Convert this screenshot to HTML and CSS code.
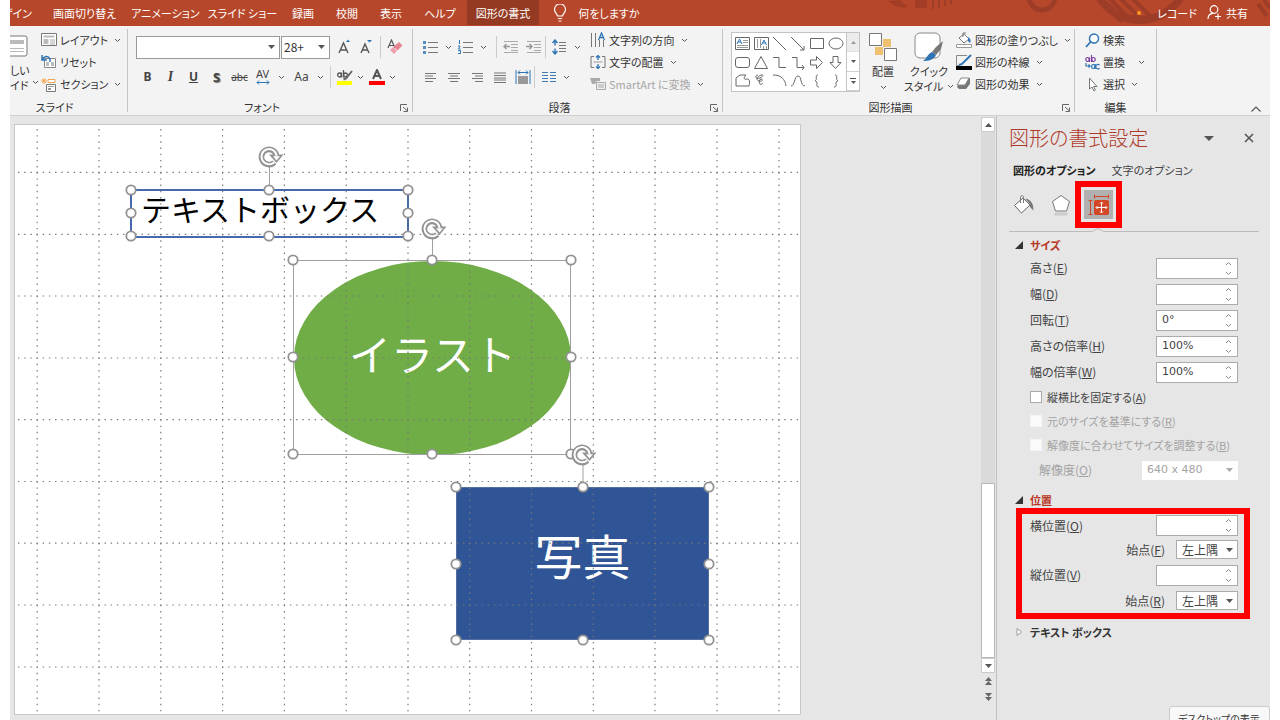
FILE: index.html
```html
<!DOCTYPE html>
<html lang="ja">
<head>
<meta charset="utf-8">
<title>図形の書式設定</title>
<link rel="stylesheet" href="styles.css">
</head>
<body>
<svg class="defs" aria-hidden="true">
  <symbol id="chev" viewBox="0 0 7 5"><path d="M1 1l2.500 2.500L6 1" fill="none" stroke="#555"/></symbol>
  <symbol id="tri" viewBox="0 0 7 4"><path d="M0 0h7l-3.500 4z" fill="#555"/></symbol>
  <symbol id="launch" viewBox="0 0 9 8"><path d="M.5 7V.5H7M3 3l4.500 4M7.500 3.500v4h-4" fill="none" stroke="#666"/></symbol>
  <symbol id="handle" viewBox="-6 -6 12 12"><circle r="4.700" fill="#fff" stroke="#929292" stroke-width="1.800"/></symbol>
  <symbol id="rotate" viewBox="-15 -12 30 24">
    <path d="M5.400 5.400A7.600 7.600 0 1 1 7.600-1" fill="none" stroke="#929292" stroke-width="5.600"/>
    <path d="M0-2.500h14.500L7.500 6z" fill="#929292"/>
    <path d="M5 5.400A7.600 7.600 0 1 1 7.600-1" fill="none" stroke="#fff" stroke-width="2"/>
    <path d="M4-.8h7L7.500 3.600z" fill="#fff"/>
  </symbol>
</svg>
<div class="app">
  <header class="tabs">
    <svg class="decor" viewBox="0 0 430 25" aria-hidden="true">
      <g fill="none" stroke="#9e3d27">
        <circle cx="202" cy="-3" r="13" stroke-width="5"/>
        <circle cx="300" cy="-28" r="48" stroke-width="8"/>
        <path d="M258-2l24 24M269-2l22 22M280-2l20 20M292-2l18 18" stroke-width="4"/>
        <path d="M93 0v9M99 0v8M105 0v6M111 0v4" stroke-width="2"/>
        <path d="M418 4l9 12M424 0l6 8" stroke-width="4"/>
      </g>
      <path d="M75 0h12v8H75zM48 1a22 22 0 0 0 20 6L60 0z" fill="#a43d26"/>
    </svg>
    <nav class="tablist">
      <button class="tab tab-first">ザイン</button>
      <button class="tab">画面切り替え</button>
      <button class="tab tab-kana">アニメーション</button>
      <button class="tab tab-kana">スライド ショー</button>
      <button class="tab">録画</button>
      <button class="tab">校閲</button>
      <button class="tab">表示</button>
      <button class="tab">ヘルプ</button>
      <button class="tab tab-active">図形の書式</button>
    </nav>
    <button class="tell">
      <svg width="14" height="18" viewBox="0 0 14 18"><path d="M4.500 12c0-2-3-3.300-3-6.500a5.500 5.500 0 0 1 11 0c0 3.200-3 4.500-3 6.500zM5 14.500h4M5.500 17h3" fill="none" stroke="#fff" stroke-width="1.200"/></svg>
      何をしますか
    </button>
    <div class="account">
      <button class="tab-link"><i class="dot"></i>レコード</button>
      <button class="tab-link">
        <svg width="15" height="15" viewBox="0 0 15 15"><g fill="none" stroke="#fff" stroke-width="1.200"><circle cx="7" cy="4.500" r="3.800"/><path d="M1 14c0-3.500 2-5.500 5-5.700M11 8.500v6M8 11.500h6"/></g></svg>
        共有
      </button>
    </div>
  </header>

  <section class="ribbon">
    <div class="group g-slide">
      <div class="body">
        <button class="newslide">
          <svg width="18" height="22" viewBox="0 0 18 22"><rect x="-6" y="1" width="23" height="20" rx="2" fill="#fff" stroke="#777"/><path d="M0 5h14v4H0z" fill="#bbb"/><path d="M0 13.500h14M0 16.500h14" stroke="#bbb"/></svg>
          <span>しい</span>
          <span>イド <svg class="chev"><use href="#chev"/></svg></span>
        </button>
        <div class="stack">
          <button class="cmd"><svg width="16" height="14" viewBox="0 0 16 14"><path d="M.5.500h15v12H.5z" fill="#fff" stroke="#777"/><path d="M2.500 2.500h11v2h-11zM2.500 6h5v5h-5z" fill="#bbb"/><path d="M9 7h5M9 9h5M9 11h5" stroke="#aaa"/></svg>レイアウト<svg class="chev"><use href="#chev"/></svg></button>
          <button class="cmd"><svg width="16" height="14" viewBox="0 0 16 14"><path d="M3.500 3.500h11v9h-11z" fill="#fff" stroke="#888"/><path d="M5 7h3v4H5zM10 7h3v4h-3z" fill="#bbb"/><path d="M1 0v5h5M1 5c2-4 6-5 8-1v3" fill="none" stroke="#2e74b5" stroke-width="1.500"/></svg>リセット</button>
          <button class="cmd"><svg width="16" height="15" viewBox="0 0 16 15"><path d="M3 1v6M0 4h6M1 2l4 4M5 2L1 6" stroke="#f0a850"/><path d="M7 2.500h7v3H7z" fill="#fff" stroke="#f0a850"/><path d="M5.500 7.500h9v7h-9z" fill="#fff" stroke="#777"/><path d="M7 9h6v1H7zM7 11h3v2H7z" fill="#999"/></svg>セクション<svg class="chev"><use href="#chev"/></svg></button>
        </div>
      </div>
      <div class="caption">スライド</div>
    </div>

    <div class="group g-font">
      <div class="body rows">
        <div class="row">
          <div class="combo combo-font"><input type="text" aria-label="フォント名"><svg class="tri"><use href="#tri"/></svg></div>
          <div class="combo combo-size"><input type="text" value="28+" aria-label="フォント サイズ"><svg class="tri"><use href="#tri"/></svg></div>
          <button class="ico wide" aria-label="拡大"><svg width="16" height="16" viewBox="0 0 16 16"><path d="M3 14L7.500 4 12 14M4.500 11h6" fill="none" stroke="#555" stroke-width="1.400"/><path d="M10 3l2-2.500L14 3z" fill="#2e74b5"/></svg></button>
          <button class="ico wide" aria-label="縮小"><svg width="16" height="16" viewBox="0 0 16 16"><path d="M3 14L7 5l4 9M4.500 11h5" fill="none" stroke="#555" stroke-width="1.400"/><path d="M9 1h5l-2.500 2.500z" fill="#2e74b5"/></svg></button>
          <i class="vline"></i>
          <button class="ico" aria-label="書式のクリア"><svg width="16" height="16" viewBox="0 0 16 16"><path d="M1 9l3.500-8L8 9M2.500 6.500h4" fill="none" stroke="#555" stroke-width="1.200"/><path d="M3 11l3-3 4 4-3 3z" fill="#f0a0ac"/><path d="M6.500 7.500L12 3l3.500 3.500-5 5z" fill="#e88594"/></svg></button>
        </div>
        <div class="row row-fmt">
          <button class="fmt"><b>B</b></button>
          <button class="fmt fmt-i">I</button>
          <button class="fmt"><u><b>U</b></u></button>
          <button class="fmt fmt-s">S</button>
          <button class="fmt fmt-abc"><s>abc</s></button>
          <button class="fmt fmt-av"><span>AV</span><svg width="14" height="5" viewBox="0 0 14 5"><path d="M1 2.500h12M3 .5l-2 2 2 2M11 .5l2 2-2 2" fill="none" stroke="#2e74b5"/></svg></button>
          <svg class="chev"><use href="#chev"/></svg>
          <button class="fmt fmt-aa">Aa</button>
          <svg class="chev"><use href="#chev"/></svg>
          <i class="vline"></i>
          <button class="ico" aria-label="蛍光ペン"><svg width="16" height="16" viewBox="0 0 16 16"><g fill="none" stroke="#555" stroke-width="1.300"><ellipse cx="2.500" cy="6" rx="1.800" ry="2"/><path d="M4.500 3.500V8.500M6.500 1v7.500"/><ellipse cx="8.500" cy="6" rx="1.800" ry="2"/></g><path d="M15 2L9 9.500l-2.500 1" fill="none" stroke="#666" stroke-width="2"/><path d="M0 12h15v4H0z" fill="#ff0"/></svg></button>
          <svg class="chev"><use href="#chev"/></svg>
          <button class="ico" aria-label="フォントの色"><svg width="16" height="16" viewBox="0 0 16 16"><path d="M4 10L8 1l4 9M5.500 7h5" fill="none" stroke="#555" stroke-width="2"/><path d="M0 12h16v4H0z" fill="#f00"/></svg></button>
          <svg class="chev"><use href="#chev"/></svg>
        </div>
      </div>
      <div class="caption">フォント<svg class="launch"><use href="#launch"/></svg></div>
    </div>

    <div class="group g-para">
      <div class="body">
        <div class="rows">
          <div class="row">
            <button class="ico" aria-label="箇条書き"><svg width="16" height="14" viewBox="0 0 16 14"><path d="M0 1h3v3H0zM0 6h3v3H0zM0 11h3v3H0z" fill="#2e74b5" opacity=".8"/><path d="M5 2.500h10M5 7.500h10M5 12.500h10" stroke="#777"/></svg></button>
            <svg class="chev"><use href="#chev"/></svg>
            <button class="ico" aria-label="段落番号"><svg width="16" height="14" viewBox="0 0 16 14"><path d="M1.500 0v4M0 6h2l-1.500 3h2M0 10.500h2.500v3H0" fill="none" stroke="#2e74b5"/><path d="M5 2.500h10M5 7.500h10M5 12.500h10" stroke="#777"/></svg></button>
            <svg class="chev"><use href="#chev"/></svg>
            <i class="vline"></i>
            <button class="ico" disabled aria-label="インデント減"><svg width="16" height="14" viewBox="0 0 16 14"><path d="M1 1.500h14M8 4.500h7M8 7.500h7M8 10.500h7M1 12.500h14" stroke="#aaa"/><path d="M7 6.500H1M3.500 4L1 6.500 3.500 9" fill="none" stroke="#999" stroke-width="1.500"/></svg></button>
            <button class="ico" disabled aria-label="インデント増"><svg width="16" height="14" viewBox="0 0 16 14"><path d="M1 1.500h14M8 4.500h7M8 7.500h7M8 10.500h7M1 12.500h14" stroke="#aaa"/><path d="M0 6.500h6M3.500 4L6 6.500 3.500 9" fill="none" stroke="#999" stroke-width="1.500"/></svg></button>
            <i class="vline"></i>
            <button class="ico" aria-label="行間"><svg width="16" height="16" viewBox="0 0 16 16"><path d="M3 1v5.500M3 9.500V15M.5 4L3 1l2.500 3M.5 12L3 15l2.500-3" fill="none" stroke="#2e74b5" stroke-width="1.400"/><path d="M7 3.500h7M7 6.500h7M7 9.500h7M7 12.500h7" stroke="#777"/></svg></button>
            <svg class="chev"><use href="#chev"/></svg>
          </div>
          <div class="row row-align">
            <button class="ico" aria-label="左揃え"><svg width="14" height="11" viewBox="0 0 14 11"><path d="M1 1.500h11M1 4h8M1 6.500h11M1 9.500h8" stroke="#777"/></svg></button>
            <button class="ico" aria-label="中央揃え"><svg width="14" height="11" viewBox="0 0 14 11"><path d="M1 1.500h12M3 4h8M1 6.500h12M3 9.500h8" stroke="#777"/></svg></button>
            <button class="ico" aria-label="右揃え"><svg width="14" height="11" viewBox="0 0 14 11"><path d="M2 1.500h11M5 4h8M2 6.500h11M5 9.500h8" stroke="#777"/></svg></button>
            <button class="ico" aria-label="両端揃え"><svg width="14" height="11" viewBox="0 0 14 11"><path d="M1 1h12M1 3.500h12M1 6h12M1 8h12M1 10.500h12" stroke="#777"/></svg></button>
            <button class="ico" aria-label="均等割り付け"><svg width="16" height="16" viewBox="0 0 16 16"><path d="M1 1v14M15 1v14M3 3.500h10M5 1.500l-2 2 2 2M11 1.500l2 2-2 2" fill="none" stroke="#2e74b5"/><path d="M3 7h10v8H3z" fill="#999"/></svg></button>
            <i class="vline"></i>
            <button class="ico" aria-label="段組み"><svg width="14" height="12" viewBox="0 0 14 12"><path d="M0 1.500h6M0 4.500h6M0 7.500h6M0 10.500h6M8 1.500h6M8 4.500h6M8 7.500h6M8 10.500h6" stroke="#3c7ab5"/></svg></button>
            <svg class="chev"><use href="#chev"/></svg>
          </div>
        </div>
        <div class="stack">
          <button class="cmd"><svg width="16" height="16" viewBox="0 0 16 16"><path d="M1.500 1v14M5.500 1v14M9.500 8v7M13.500 8v7" stroke="#777"/><path d="M8.500 8L11.500 1l3 7M9.500 5.500h4" fill="none" stroke="#2e74b5" stroke-width="1.300"/></svg>文字列の方向<svg class="chev"><use href="#chev"/></svg></button>
          <button class="cmd"><svg width="16" height="14" viewBox="0 0 16 14"><path d="M4 1.500H1v11h3M12 1.500h3v11h-3" fill="none" stroke="#777"/><path d="M3.500 7h9" stroke="#999"/><path d="M8 0v5M8 9v5M6 2.500L8 .5l2 2M6 11.500l2 2 2-2" fill="none" stroke="#2e74b5" stroke-width="1.300"/></svg>文字の配置<svg class="chev"><use href="#chev"/></svg></button>
          <button class="cmd" disabled><svg width="16" height="14" viewBox="0 0 16 14"><path d="M0 1h10v3H7L5 7H2z" fill="#aaa"/><path d="M6.500 5.500h9v7h-9z" fill="#eee" stroke="#aaa"/><path d="M8 8h6M8 10h6" stroke="#aaa"/></svg>SmartArt に変換<svg class="chev"><use href="#chev"/></svg></button>
        </div>
      </div>
      <div class="caption">段落<svg class="launch"><use href="#launch"/></svg></div>
    </div>

    <div class="group g-draw">
      <div class="body">
        <div class="gallery">
          <svg width="114" height="58" viewBox="0 0 114 58" fill="none" stroke="#666">
            <path d="M3.500 4.500h14v12h-14zM22.500 4.500h14v12h-14z" fill="#fff"/><path d="M11 7.500h5M11 9.500h5M5 12.500h11M5 14.500h11M25.500 6v9M28.500 6v9M31.500 13v3M34.500 13v3" stroke="#999"/><path d="M5 11l2.500-5 2.500 5M6 9h3M29.500 12l2.500-5 2.500 5M30.500 10h3" stroke="#2e74b5"/>
            <path d="M41 4l13 13M59 4l13 13M72 13v4h-4M78.500 5.500h13v10h-13z"/><ellipse cx="104" cy="10.500" rx="7" ry="5.500"/>
            <rect x="3.500" y="24.500" width="14" height="10" rx="2.500"/><path d="M22.500 35.500l6.500-12 6.500 12zM41 24.500h6v10h7M60 24.500h5v10h7M70 32l2 2.500-2 2.500M78.500 27v5h6v3.500l6-6-6-6V27zM101 23.500v6h-3l5.500 6 5.500-6h-3v-6z"/>
            <path d="M4 53V45l4-3h6c-3 3-2 5 1 4 3 0 3 3 2 7zM26 42c-5 2-1 4 2 3s4-4 1-3-6 5-2 6 4-2 2-2-2 4-1 5 2 0 3-1M41 42c8 0 12 4 13 11M59 53c4 0 3-10 7-10s2 10 7 10M86 42c-3 0-1 4-2 5s-1 1-1 1 2 0 2 2-1 4 2 4M103 42c3 0 1 4 2 5s1 1 1 1-2 0-2 2 1 4-2 4"/>
          </svg>
          <div class="gallery-nav">
            <button aria-label="上" disabled><svg class="tri flip"><use href="#tri"/></svg></button>
            <button aria-label="下"><svg class="tri"><use href="#tri"/></svg></button>
            <button aria-label="その他"><i class="bar"></i><svg class="tri"><use href="#tri"/></svg></button>
          </div>
        </div>
        <button class="big">
          <svg width="28" height="28" viewBox="0 0 28 28"><path d="M14 6h8v8h-8zM6 14h8v8H6z" fill="#f0c070"/><path d="M.5.500h12v12H.5zM15.500 15.500h12v12h-12z" fill="#fff" stroke="#777"/></svg>
          <span>配置</span><svg class="chev"><use href="#chev"/></svg>
        </button>
        <button class="big">
          <svg width="30" height="30" viewBox="0 0 30 30"><rect x="1" y="1" width="25" height="25" rx="5" fill="#fff" stroke="#888"/><path d="M29 9l-7 6-4 5 4 3 5-6z" fill="#777"/><path d="M18 20l4 3c-2 5-8 6-13 6 4-2 4-7 9-9z" fill="#2e74b5"/></svg>
          <span>クイック</span><span class="nowrap">スタイル <svg class="chev"><use href="#chev"/></svg></span>
        </button>
        <div class="stack">
          <button class="cmd"><svg width="16" height="16" viewBox="0 0 16 16"><path d="M3 6l5-4 5 5-5 4zM7 5V1h3" fill="#fff" stroke="#777"/><path d="M12 5c3 2 3 4 2 6l-2-2z" fill="#2e74b5"/><path d="M.5 12.500h15v3H.5z" fill="#fff" stroke="#999"/></svg>図形の塗りつぶし<svg class="chev"><use href="#chev"/></svg></button>
          <button class="cmd"><svg width="16" height="16" viewBox="0 0 16 16"><path d="M11 1.500H.5v10h3" fill="none" stroke="#888"/><path d="M15 1L6 10l-3 1" fill="none" stroke="#2e74b5" stroke-width="2"/><path d="M0 12h16v4H0z" fill="#000"/></svg>図形の枠線<svg class="chev"><use href="#chev"/></svg></button>
          <button class="cmd"><svg width="16" height="14" viewBox="0 0 16 14"><path d="M5 1h9v6l-4 5H3l-2-2z" fill="#777"/><path d="M5 1h8L9 8H1z" fill="#fff" stroke="#888"/></svg>図形の効果<svg class="chev"><use href="#chev"/></svg></button>
        </div>
      </div>
      <div class="caption">図形描画<svg class="launch"><use href="#launch"/></svg></div>
    </div>

    <div class="group g-edit">
      <div class="body">
        <div class="stack">
          <button class="cmd"><svg width="15" height="15" viewBox="0 0 15 15"><circle cx="9" cy="5.500" r="4.500" fill="#fff" stroke="#2e74b5" stroke-width="1.500"/><path d="M5.500 9L1 14" stroke="#2e74b5" stroke-width="1.800"/></svg>検索</button>
          <button class="cmd"><svg width="15" height="15" viewBox="0 0 15 15"><g fill="none" stroke="#7b3fa0" stroke-width="1.200"><ellipse cx="2.500" cy="4.500" rx="1.700" ry="2"/><path d="M4.500 2.500v4.500M6.500 0v7"/><ellipse cx="8.500" cy="4.500" rx="1.700" ry="2"/></g><g fill="none" stroke="#2e74b5" stroke-width="1.200"><path d="M1 8v3h4M3.500 9.500L5 11l-1.500 1.500M10.200 9v5M14.500 10a2.200 2.200 0 1 0 0 3.200"/><ellipse cx="8.300" cy="11.500" rx="1.700" ry="2"/></g></svg>置換<svg class="chev far"><use href="#chev"/></svg></button>
          <button class="cmd"><svg width="15" height="15" viewBox="0 0 15 15"><path d="M4.500 1v11l2.500-2 2 4 1.500-1-2-3.500H12z" fill="#fff" stroke="#777"/></svg>選択<svg class="chev"><use href="#chev"/></svg></button>
        </div>
      </div>
      <div class="caption">編集</div>
    </div>
    <button class="collapse" aria-label="リボンを折りたたむ"><svg width="10" height="6" viewBox="0 0 10 6"><path d="M.5 5.500L5 1l4.500 4.500" fill="none" stroke="#555" stroke-width="1.200"/></svg></button>
  </section>

  <main class="work">
    <div class="stage">
      <div class="slide">
        <div class="shape textbox">テキストボックス</div>
        <div class="shape ellipse">イラスト</div>
        <div class="shape rect">写真</div>
        <svg class="overlay" viewBox="15 125 785 589" aria-hidden="true">
          <g stroke="#777" stroke-dasharray="1.400 4.780" stroke-width="1.200" fill="none">
            <path d="M37.200 129V712M99 129V712M160.800 129V712M222.600 129V712M284.400 129V712M346.200 129V712M408 129V712M469.700 129V712M531.500 129V712M593.300 129V712M655 129V712M717 129V712M779 129V712"/>
            <path d="M18 172.300H800M18 234.300H800M18 296H800M18 358H800M18 419.700H800M18 481.500H800M18 543.200H800M18 605H800M18 667H800"/>
          </g>
          <g fill="none" stroke="#a0a0a0"><path d="M293.500 260.500h277v194h-277zM269.500 165v25M432.500 237v23M583 463v24"/></g>
          <g>
            <use href="#handle" x="125" y="184" width="12" height="12"/><use href="#handle" x="263" y="184" width="12" height="12"/><use href="#handle" x="402" y="184" width="12" height="12"/>
            <use href="#handle" x="125" y="207" width="12" height="12"/><use href="#handle" x="402" y="207" width="12" height="12"/>
            <use href="#handle" x="125" y="230" width="12" height="12"/><use href="#handle" x="263" y="230" width="12" height="12"/><use href="#handle" x="402" y="230" width="12" height="12"/>
            <use href="#handle" x="287" y="254" width="12" height="12"/><use href="#handle" x="426" y="254" width="12" height="12"/><use href="#handle" x="565" y="254" width="12" height="12"/>
            <use href="#handle" x="287" y="351" width="12" height="12"/><use href="#handle" x="565" y="351" width="12" height="12"/>
            <use href="#handle" x="287" y="448" width="12" height="12"/><use href="#handle" x="426" y="448" width="12" height="12"/><use href="#handle" x="565" y="448" width="12" height="12"/>
            <use href="#handle" x="450" y="481" width="12" height="12"/><use href="#handle" x="577" y="481" width="12" height="12"/><use href="#handle" x="703" y="481" width="12" height="12"/>
            <use href="#handle" x="450" y="558" width="12" height="12"/><use href="#handle" x="703" y="558" width="12" height="12"/>
            <use href="#handle" x="450" y="634" width="12" height="12"/><use href="#handle" x="577" y="634" width="12" height="12"/><use href="#handle" x="703" y="634" width="12" height="12"/>
            <use href="#rotate" x="254" y="145" width="30" height="24"/><use href="#rotate" x="417" y="217" width="30" height="24"/><use href="#rotate" x="567" y="443" width="30" height="24"/>
          </g>
        </svg>
      </div>
    </div>
    <div class="scroll">
      <button class="sbtn" aria-label="上へ"><svg class="tri flip"><use href="#tri"/></svg></button>
      <div class="track"><div class="thumb"></div></div>
      <button class="sbtn" aria-label="下へ"><svg class="tri"><use href="#tri"/></svg></button>
      <button class="page" aria-label="前のスライド"><svg width="9" height="9" viewBox="0 0 9 9"><path d="M1 4l3.500-4L8 4zM1 8l3.500-4L8 8z" fill="#666"/></svg></button>
      <button class="page" aria-label="次のスライド"><svg width="9" height="9" viewBox="0 0 9 9"><path d="M1 0h7L4.500 4zM1 4h7L4.500 8z" fill="#666"/></svg></button>
    </div>
    <aside class="pane">
      <div class="pane-head">
        <h1>図形の書式設定</h1>
        <button aria-label="作業ウィンドウ オプション"><svg width="10" height="5" viewBox="0 0 10 5"><path d="M0 0h10L5 5z" fill="#555"/></svg></button>
        <button aria-label="閉じる"><svg width="10" height="10" viewBox="0 0 10 10"><path d="M1 1l8 8M9 1L1 9" stroke="#555" stroke-width="1.600"/></svg></button>
      </div>
      <div class="pane-tabs">
        <button class="on">図形のオプション</button>
        <button>文字のオプション</button>
      </div>
      <div class="pane-icons">
        <button class="pi" aria-label="塗りつぶしと線"><svg width="22" height="22" viewBox="0 0 22 22"><path d="M1.500 11.500L10 4l7 7-8.500 8z" fill="#fff" stroke="#666"/><path d="M7.500 9V3.500c0-2.500 3-2.500 3 0V9" fill="none" stroke="#777"/><path d="M12 4.500c6 1 8.500 5 8.500 12L17 13v-3z" fill="#777"/></svg></button>
        <button class="pi" aria-label="効果"><svg width="22" height="22" viewBox="0 0 22 22"><path d="M11 1.500l8.500 6-3 9.500h-11l-3-9.500z" fill="#fff" stroke="#777"/><path d="M5 18.500h12l1 3H4z" fill="#ccc"/></svg></button>
        <button class="marked" aria-label="サイズとプロパティ"><svg width="22" height="22" viewBox="0 0 22 22"><rect x="6" y="6" width="15" height="15" rx="2" fill="#d24726"/><path d="M13.500 8.500v10M8.500 13.500h10" stroke="#fff"/><path d="M12 9.500l1.500-1.500L15 9.500M12 17.500l1.500 1.500 1.500-1.500M9.500 12L8 13.500 9.500 15M17.500 12l1.500 1.500-1.500 1.500" fill="none" stroke="#fff"/><path d="M6 2.500h15M6.500.500v4M20.500.500v4M2.500 6v15M.500 6.500h4M.500 20.500h4" stroke="#d24726"/></svg></button>
      </div>
      <svg class="divider" viewBox="0 0 250 4" preserveAspectRatio="xMidYMid meet" aria-hidden="true"><path d="M0 3.500h83l6-3 6 3h155" fill="none" stroke="#bbb"/></svg>
      <h2 class="section"><svg width="8" height="8" viewBox="0 0 8 8"><path d="M8 0v8H0z" fill="#333"/></svg>サイズ</h2>
      <div class="fields">
        <div class="field"><label for="h">高さ(<u>E</u>)</label><div class="spin"><input id="h" type="text"><svg class="ud" viewBox="0 0 7 15"><path d="M1 4l2.500-2.500L6 4M1 11l2.500 2.500L6 11" fill="none" stroke="#888"/></svg></div></div>
        <div class="field"><label for="w">幅(<u>D</u>)</label><div class="spin"><input id="w" type="text"><svg class="ud" viewBox="0 0 7 15"><path d="M1 4l2.500-2.500L6 4M1 11l2.500 2.500L6 11" fill="none" stroke="#888"/></svg></div></div>
        <div class="field"><label for="r">回転(<u>T</u>)</label><div class="spin"><input id="r" type="text" value="0°"><svg class="ud" viewBox="0 0 7 15"><path d="M1 4l2.500-2.500L6 4M1 11l2.500 2.500L6 11" fill="none" stroke="#888"/></svg></div></div>
        <div class="field"><label for="hs">高さの倍率(<u>H</u>)</label><div class="spin"><input id="hs" type="text" value="100%"><svg class="ud" viewBox="0 0 7 15"><path d="M1 4l2.500-2.500L6 4M1 11l2.500 2.500L6 11" fill="none" stroke="#888"/></svg></div></div>
        <div class="field"><label for="ws">幅の倍率(<u>W</u>)</label><div class="spin"><input id="ws" type="text" value="100%"><svg class="ud" viewBox="0 0 7 15"><path d="M1 4l2.500-2.500L6 4M1 11l2.500 2.500L6 11" fill="none" stroke="#888"/></svg></div></div>
        <label class="check"><input type="checkbox"><span>縦横比を固定する(<u>A</u>)</span></label>
        <label class="check off"><input type="checkbox" disabled><span>元のサイズを基準にする(<u>R</u>)</span></label>
        <label class="check off"><input type="checkbox" disabled><span>解像度に合わせてサイズを調整する(<u>B</u>)</span></label>
        <div class="field off indent"><label for="res">解像度(<u>O</u>)</label><div class="drop drop-res"><select id="res" disabled><option>640 x 480</option></select><svg class="tri"><use href="#tri"/></svg></div></div>
      </div>
      <h2 class="section section-pos"><svg width="8" height="8" viewBox="0 0 8 8"><path d="M8 0v8H0z" fill="#333"/></svg>位置</h2>
      <div class="framed">
        <div class="field"><label for="x">横位置(<u>O</u>)</label><div class="spin"><input id="x" type="text"><svg class="ud" viewBox="0 0 7 15"><path d="M1 4l2.500-2.500L6 4M1 11l2.500 2.500L6 11" fill="none" stroke="#888"/></svg></div></div>
        <div class="field from"><label for="xf">始点(<u>F</u>)</label><div class="drop"><select id="xf"><option>左上隅</option></select><svg class="tri"><use href="#tri"/></svg></div></div>
        <div class="field"><label for="y">縦位置(<u>V</u>)</label><div class="spin"><input id="y" type="text"><svg class="ud" viewBox="0 0 7 15"><path d="M1 4l2.500-2.500L6 4M1 11l2.500 2.500L6 11" fill="none" stroke="#888"/></svg></div></div>
        <div class="field from"><label for="yf">始点(<u>R</u>)</label><div class="drop"><select id="yf"><option>左上隅</option></select><svg class="tri"><use href="#tri"/></svg></div></div>
      </div>
      <h2 class="section section-closed"><svg width="8" height="8" viewBox="0 0 8 8"><path d="M2 .5v7L6.500 4z" fill="#fff" stroke="#999"/></svg>テキスト ボックス</h2>
    </aside>
    <div class="tip">デスクトップの表示</div>
  </main>
</div>
</body>
</html>
```
FILE: styles.css
```css
* { box-sizing: border-box; }
html, body { height: 100%; }
body {
  margin: 0;
  background: #fff;
  color: #333;
  font-family: "Noto Sans CJK JP", "Noto Sans", sans-serif;
  font-size: 12px;
  line-height: 16px;
  font-feature-settings: "palt";
  overflow: hidden;
}
button, input, select { font: inherit; font-feature-settings: inherit; color: inherit; }
button { border: 0; padding: 0; background: none; white-space: nowrap; }
svg { flex: none; display: block; }
.defs { position: absolute; width: 0; height: 0; }
.chev { width: 7px; height: 5px; }
.tri { width: 7px; height: 4px; }
.flip { transform: rotate(180deg); }

.app { height: 100%; margin: 0 10px; display: flex; flex-direction: column; background: #e6e6e6; }

/* tab strip */
.tabs { position: relative; flex: none; height: 26px; padding-bottom: 1px; display: flex; background: #b7472a; color: #fff; overflow: hidden; }
.decor { position: absolute; right: 0; top: 0; width: 430px; height: 25px; }
.tablist { display: flex; }
.tab { padding: 0 11px; height: 25px; font-size: 11px; }
.tab-kana { padding: 0 4px; }
.tab-first { width: 32px; padding: 0 10px 0 0; display: flex; align-items: center; justify-content: flex-end; }
.tab-active { padding: 0 9px; background: #943a22; }
.tell { display: flex; align-items: center; gap: 11px; margin-left: 14px; font-size: 11px; }
.account { position: relative; margin-left: auto; padding-right: 22px; display: flex; gap: 10px; font-size: 11px; }
.tab-link { display: flex; align-items: center; gap: 4px; }
.dot { width: 4px; height: 4px; border-radius: 50%; background: #ff9a1a; margin-right: 12px; }

/* ribbon */
.ribbon { flex: none; height: 90px; display: flex; background: #f3f3f3; border-bottom: 1px solid #d0d0d0; padding: 3px 0; }
.group { flex: none; display: flex; flex-direction: column; border-right: 1px solid #c4c4c4; height: 83px; }
.body { flex: none; height: 71px; display: flex; }
.caption { display: flex; justify-content: center; height: 14px; line-height: 14px; font-size: 11px; position: relative; }
.launch { position: absolute; right: 3px; top: 4px; width: 9px; height: 8px; }
.g-slide { width: 118px; }
.g-slide .caption { padding-right: 28px; }
.g-font { width: 285px; }
.g-font .caption { padding-right: 16px; }
.g-para { width: 310px; }
.g-para .caption { padding-right: 16px; }
.g-draw { width: 352px; }
.g-draw .caption { padding-right: 16px; }
.g-edit { width: 82px; }
.stack { display: flex; flex-direction: column; }
.cmd { display: flex; align-items: center; gap: 3px; height: 22px; font-size: 11px; }
.cmd .chev { margin-left: 3px; }
.cmd .far { margin-left: 10px; }
.cmd:disabled { color: #a8a8a8; }
.nowrap { display: flex; align-items: center; gap: 4px; }

.newslide { width: 28px; padding-top: 6px; display: flex; flex-direction: column; align-items: flex-start; font-size: 11px; }
.newslide svg:first-child { margin-bottom: 6px; }
.newslide span { display: flex; align-items: center; gap: 4px; line-height: 15px; }
.newslide .chev { margin: 0; }
.g-slide .stack { margin-left: 3px; }

.rows { display: flex; flex-direction: column; }
.row { display: flex; align-items: center; height: 32px; }
.row-fmt, .row-align { height: 28px; }
.g-font .rows { padding: 2px 0 0 8px; }
.combo { display: flex; align-items: center; height: 23px; padding-right: 4px; background: #fff; border: 1px solid #999; }
.combo input { flex: 1; min-width: 0; border: 0; padding: 0 2px; background: none; outline: 0; }
.combo-font { width: 144px; }
.combo-size { width: 49px; margin-left: 1px; }
.ico { flex: none; display: flex; justify-content: center; align-items: center; width: 16px; height: 18px; }
.wide { margin-left: 6px; }
.vline { flex: none; width: 1px; height: 22px; background: #ccc; margin: 0 6px; }
.fmt { flex: none; width: 23px; height: 20px; color: #444; font-family: "Noto Sans", sans-serif; font-size: 12px; }
.fmt-i { font-family: "Liberation Serif", serif; font-style: italic; font-weight: 700; font-size: 14px; }
.fmt-s { font-weight: 700; text-shadow: 1px 1px 1px #777; font-size: 13px; }
.fmt-abc { font-size: 10px; }
.fmt-av { display: flex; flex-direction: column; align-items: center; line-height: 13px; font-size: 11px; }
.row-fmt .vline { margin: 0 6px 0 1px; }
.row-fmt .chev { margin: 0 5px 0 4px; }

.g-para .rows { flex: none; width: 177px; padding: 2px 0 0 10px; }
.g-para .row .chev { margin: 0 6px; }
.g-para .row .vline { margin: 0 6px 0 3px; }
.g-para .row .ico + .ico { margin-left: 7px; }

.g-draw .body { padding-left: 8px; }
.gallery { display: flex; height: 60px; margin-top: 3px; border: 1px solid #c4c4c4; background: #fff; }
.gallery-nav { display: grid; grid-template-rows: 1fr 1fr 1fr; width: 13px; border-left: 1px solid #c4c4c4; }
.gallery-nav button { display: flex; flex-direction: column; gap: 2px; align-items: center; justify-content: center; border-bottom: 1px solid #d0d0d0; }
.gallery-nav button:disabled { background: #e0e0e0; opacity: .6; }
.gallery-nav .tri { width: 5px; height: 3px; }
.bar { width: 6px; height: 1px; background: #555; }
.big { flex: none; display: flex; flex-direction: column; align-items: center; width: 46px; padding-top: 3px; font-size: 11px; line-height: 15px; }
.big > svg:first-child { height: 30px; margin-bottom: 2px; }
.big > .chev { margin-top: 6px; }
.g-draw .big + .stack { margin-left: 4px; }
.g-edit .stack { margin-left: 10px; }
.collapse { margin-left: auto; padding-right: 9px; align-self: flex-end; }

/* workspace */
.work { position: relative; flex: 1; min-height: 0; display: flex; overflow: hidden; }
.stage { flex: 1; padding: 9px 0 0 5px; overflow: hidden; }
.slide { position: relative; width: 785px; height: 589px; background: #fff; outline: 1px solid #c8c8c8; font-feature-settings: normal; }
.overlay { position: absolute; inset: 0; width: 100%; height: 100%; }
.shape { position: absolute; display: flex; align-items: center; justify-content: center; color: #fff; white-space: nowrap; }
.textbox { left: 115px; top: 64px; width: 279px; height: 49px; padding: 0 0 11px 9px; justify-content: flex-start; border: 2px solid #4669b0; color: #000; font-size: 30px; }
.ellipse { left: 279px; top: 136px; width: 277px; height: 194px; border-radius: 50%; background: #70ad47; font-size: 42px; padding-bottom: 10px; }
.rect { left: 441px; top: 362px; width: 253px; height: 153px; background: #2f5597; border: 1px solid #536f9f; font-size: 48px; padding-bottom: 20px; }

.scroll { flex: none; width: 15px; margin-top: 1px; display: flex; flex-direction: column; }
.sbtn { width: 14px; height: 15px; display: flex; align-items: center; justify-content: center; background: #fff; border: 1px solid #ccc; }
.track { width: 14px; height: 526px; background: #dadada; display: flex; align-items: flex-end; }
.thumb { width: 14px; height: 175px; background: #fff; border: 1px solid #b8b8b8; }
.page { height: 16px; display: flex; align-items: center; justify-content: center; }

/* format pane */
.pane { flex: none; width: 274px; border-left: 1px solid #c0c0c0; padding: 9px 12px 0 12px; color: #444; }
.pane-head { display: flex; align-items: center; height: 26px; padding-right: 4px; }
.pane-head h1 { flex: 1; margin: 0; color: #b03a2a; font-size: 20px; line-height: 26px; font-weight: 300; white-space: nowrap; }
.pane-head button + button { margin-left: 30px; }
.pane-tabs { display: flex; gap: 16px; padding: 11px 0 0 4px; font-size: 11px; }
.pane-tabs .on { font-weight: 700; color: #222; }
.pane-icons { display: flex; align-items: center; padding: 3px 0 0 4px; height: 50px; }
.pi { margin-right: 15px; }
.pi + .pi { margin-right: 3px; }
.marked { width: 47px; height: 47px; border: 6px solid #fe0000; background: #b0b0b0; box-shadow: inset 0 0 0 3px #e6e6e6; display: flex; align-items: center; justify-content: center; }
.divider { width: 250px; height: 4px; }
.section { margin: 0; padding: 5px 0 0 6px; display: flex; align-items: center; gap: 7px; font-size: 11px; line-height: 16px; color: #b7371f; font-weight: 700; }
.fields { padding: 2px 20px 0 21px; }
.field { display: flex; align-items: center; justify-content: space-between; height: 26px; }
.spin, .drop { display: flex; align-items: center; background: #fff; border: 1px solid #ababab; padding-right: 5px; }
.spin { width: 82px; height: 21px; }
.spin input { flex: 1; min-width: 0; border: 0; padding: 0 5px; background: none; outline: 0; font-family: "DejaVu Sans", sans-serif; font-size: 11px; }
.ud { width: 7px; height: 15px; }
.drop { width: 62px; height: 19px; padding-right: 4px; }
.drop select { flex: 1; min-width: 0; appearance: none; border: 0; padding: 0 0 0 5px; background: none; outline: 0; line-height: 16px; opacity: 1; }
.drop-res { width: 96px; border-color: #fff; }
.drop-res select { padding-left: 4px; font-family: "DejaVu Sans", sans-serif; font-size: 11px; }
.check { display: flex; align-items: center; gap: 5px; height: 24px; white-space: nowrap; margin-right: -20px; font-size: 11px; }
.check input { appearance: none; flex: none; width: 12px; height: 12px; margin: 0; background: #fff; border: 1px solid #aaa; }
.off { color: #a3a3a3; }
.off input { border-color: #f4f4f4; background: #fafafa; }
.off .tri { opacity: .5; }
.indent { padding-left: 9px; }
.section-pos { padding-top: 8px; line-height: 18px; }
.framed { margin: -1px 8px 0 7px; border: 6px solid #fe0000; padding: 0 6px 0 8px; height: 111px; }
.framed .field { height: 25px; }
.framed .field:first-child { height: 23px; }
.framed .field:nth-child(3) { height: 26px; }
.framed .from { justify-content: flex-end; gap: 11px; }
.section-closed { padding-top: 5px; color: #333; }

.tip { position: absolute; right: 0; bottom: -8px; width: 101px; height: 22px; padding: 4px 8px; background: #f8f8f8; border: 1px solid #ccc; border-radius: 3px; font-size: 10px; line-height: 15px; white-space: nowrap; overflow: hidden; }
```
